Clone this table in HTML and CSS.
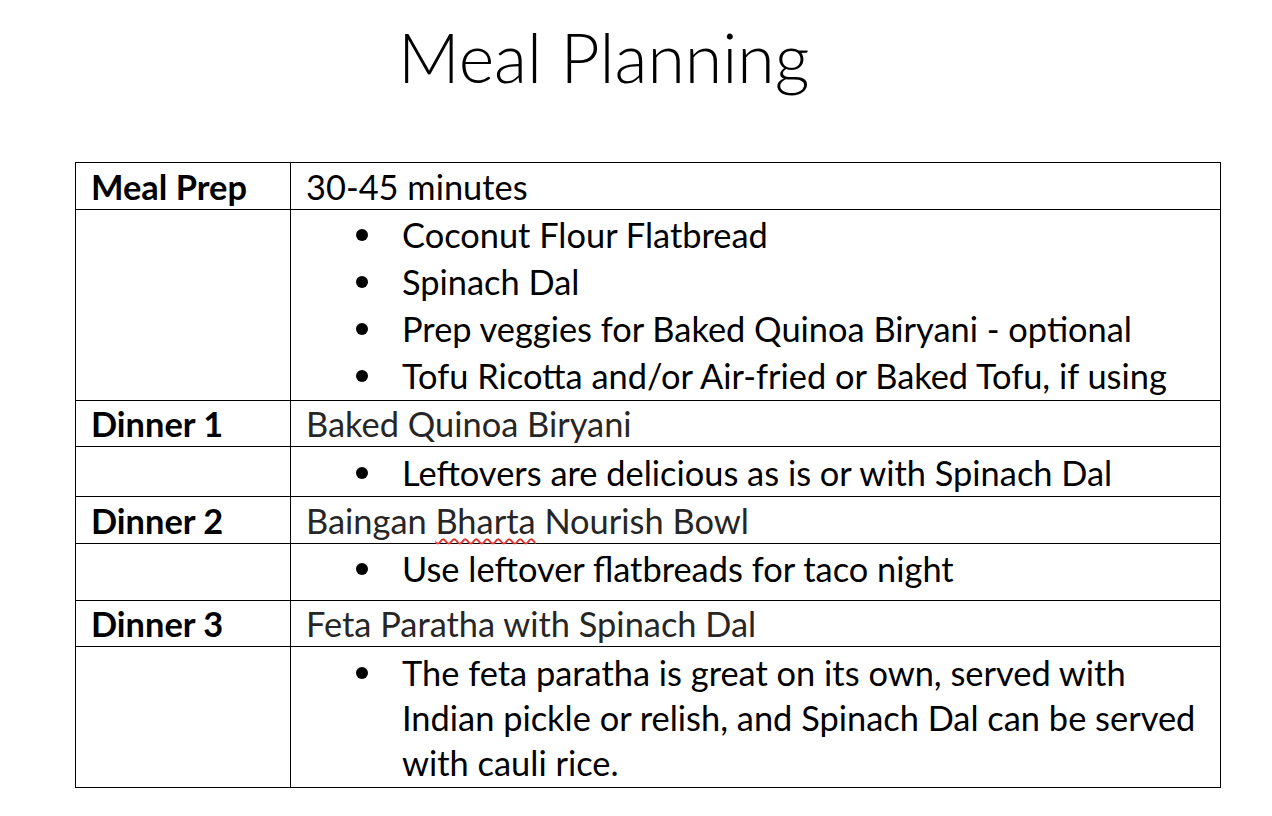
FILE: index.html
```html
<!DOCTYPE html>
<html>
<head>
<meta charset="utf-8">
<link rel="stylesheet" href="styles.css">
</head>
<body>
<div class="page">
  <h1 class="title">Meal Planning</h1>
  <table class="plan">
    <tr class="head-row">
      <th>Meal Prep</th>
      <td class="black">30-45 minutes</td>
    </tr>
    <tr class="list-row">
      <th></th>
      <td>
        <ul>
          <li>Coconut Flour Flatbread</li>
          <li>Spinach Dal</li>
          <li>Prep veggies for Baked Quinoa Biryani - optional</li>
          <li>Tofu Ricotta and/or Air-fried or Baked Tofu, if using</li>
        </ul>
      </td>
    </tr>
    <tr class="head-row">
      <th>Dinner 1</th>
      <td>Baked Quinoa Biryani</td>
    </tr>
    <tr class="list-row">
      <th></th>
      <td>
        <ul>
          <li>Leftovers are delicious as is or with Spinach Dal</li>
        </ul>
      </td>
    </tr>
    <tr class="head-row">
      <th>Dinner 2</th>
      <td>Baingan <span class="spell">Bharta</span> Nourish Bowl</td>
    </tr>
    <tr class="list-row r-tall">
      <th></th>
      <td>
        <ul>
          <li>Use leftover flatbreads for taco night</li>
        </ul>
      </td>
    </tr>
    <tr class="head-row">
      <th>Dinner 3</th>
      <td>Feta Paratha with Spinach Dal</td>
    </tr>
    <tr class="list-row r-last">
      <th></th>
      <td>
        <ul>
          <li>The feta paratha is great on its own, served with<br>Indian pickle or relish, and Spinach Dal can be served<br>with cauli rice.</li>
        </ul>
      </td>
    </tr>
  </table>
</div>
</body>
</html>
```

FILE: styles.css
```css
html, body {
  margin: 0;
  padding: 0;
  background: #ffffff;
}

.page {
  width: 1272px;
  height: 816px;
  box-sizing: border-box;
  padding-top: 16px;
  font-family: Lato, "Liberation Sans", sans-serif;
  color: #000;
}

.title {
  margin: 0 0 0 398px;
  font-weight: 300;
  font-size: 68px;
  line-height: 82px;
  height: 146px;
  color: #000;
}

.plan {
  margin-left: 75px;
  width: 1146px;
  border-collapse: collapse;
  font-size: 34.4px;
  line-height: 45px;
}

.plan th,
.plan td {
  border: 1px solid #000;
  text-align: left;
  vertical-align: top;
  padding: 0 0 0 15px;
}

.plan th {
  width: 199px;
  font-weight: 700;
  color: #000;
}

.plan td {
  color: #262626;
}

.plan td.black {
  color: #000;
}

.head-row th,
.head-row td {
  height: 45px;
  padding-top: 0.5px;
  padding-bottom: 0;
}

.list-row td {
  color: #000;
  padding-top: 2.5px;
  padding-bottom: 1.5px;
}

.plan ul {
  margin: 0;
  padding: 0 0 0 96px;
  list-style: none;
}

.plan li {
  position: relative;
}

.plan li + li {
  margin-top: 2px;
}

.plan li::before {
  content: "";
  position: absolute;
  left: -46px;
  top: 17px;
  width: 12px;
  height: 12px;
  border-radius: 50%;
  background: #000;
}

.r-tall td { padding-bottom: 8.5px; }
.r-last td { padding-bottom: 2.5px; }

.spell {
  text-decoration: underline wavy #e0312c;
  text-decoration-thickness: 1.5px;
  text-underline-offset: 4px;
  text-decoration-skip-ink: none;
}
```
